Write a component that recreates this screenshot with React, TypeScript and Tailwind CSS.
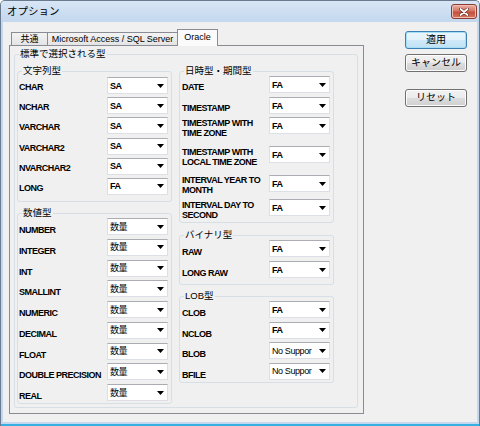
import React from "react";

const Arrow = () => (
  <svg width="7" height="4" viewBox="0 0 7 4">
    <path d="M0 0H7L3.5 4Z" fill="#000" />
  </svg>
);

function Combo({ value, bold = true }: { value: string; bold?: boolean }) {
  return (
    <div className="flex h-[17px] w-[61px] shrink-0 items-center border border-[#dcdfe6] border-t-[#abadb3] bg-white">
      <div
        className={
          "flex-1 whitespace-nowrap pl-[2px] text-[9px] leading-[10px] tracking-[-0.4px] text-black " +
          (bold ? "font-bold" : "font-normal")
        }
      >
        {value}
      </div>
      <div className="flex w-[17px] shrink-0 justify-end pr-[3px]">
        <Arrow />
      </div>
    </div>
  );
}

function Row({
  label,
  value,
  rowCls = "",
  labelCls,
  bold = true,
}: {
  label: React.ReactNode;
  value: string;
  rowCls?: string;
  labelCls: string;
  bold?: boolean;
}) {
  return (
    <div className={"flex items-start justify-between " + rowCls}>
      <div className={"text-[9px] font-bold leading-[10px] tracking-[-0.5px] text-black " + labelCls}>{label}</div>
      <Combo value={value} bold={bold} />
    </div>
  );
}

function Group({
  title,
  className,
  children,
}: {
  title: string;
  className: string;
  children?: React.ReactNode;
}) {
  return (
    <div className={"rounded-[3px] border border-[#d5dfe5] " + className}>
      <div className="-mt-[7px] ml-[4px] w-fit bg-[#f0f0f0] px-[1px] text-[9.5px] leading-[12px] text-black">
        {title}
      </div>
      {children}
    </div>
  );
}

function Btn({ children, def = false }: { children: React.ReactNode; def?: boolean }) {
  return (
    <div
      className={
        "flex h-[18px] w-[62px] items-center justify-center rounded-[3px] border text-[10px] leading-[12px] text-black " +
        (def
          ? "border-[#3c7fb1] bg-[linear-gradient(#eaf6fd,#e2f2fb_50%,#cfe9f8_51%,#bfe1f5)] shadow-[inset_0_0_0_1px_#a6def7]"
          : "border-[#707070] bg-[linear-gradient(#f2f2f2,#ebebeb_50%,#dddddd_51%,#cfcfcf)] shadow-[inset_0_0_0_1px_#fcfcfc]")
      }
    >
      {children}
    </div>
  );
}

export default function App() {
  const strRows: [string, string][] = [
    ["CHAR", "SA"],
    ["NCHAR", "SA"],
    ["VARCHAR", "SA"],
    ["VARCHAR2", "SA"],
    ["NVARCHAR2", "SA"],
    ["LONG", "FA"],
  ];
  const numRows = ["NUMBER", "INTEGER", "INT", "SMALLINT", "NUMERIC", "DECIMAL", "FLOAT", "DOUBLE PRECISION", "REAL"];

  return (
    <div className="flex h-[426px] w-[480px] flex-col overflow-hidden rounded-t-[5px] border-x border-t border-[#6b7b8f] bg-[#c3d7ee] font-['Liberation_Sans','Noto_Sans_CJK_JP',sans-serif]">
      {/* title bar */}
      <div className="flex h-[21px] shrink-0 items-start justify-between bg-[linear-gradient(#d8e6f6,#c3d7ee)]">
        <div className="pl-[6px] pt-[4px] text-[10.5px] leading-[13px] text-black">オプション</div>
        <div className="mr-[2px] mt-[3px] flex h-[15px] w-[26px] items-center justify-center rounded-[3px] border border-[#8a3a30] bg-[linear-gradient(#eab0a4,#d47766_45%,#c4503c_55%,#d9745e)] shadow-[inset_0_0_0_1px_#f0c2b6]">
          <svg width="10" height="8" viewBox="0 0 10 8">
            <path d="M1.5 1L8.5 7M8.5 1L1.5 7" stroke="#5a2018" strokeWidth="3" strokeLinecap="round" />
            <path d="M1.5 1L8.5 7M8.5 1L1.5 7" stroke="#fff" strokeWidth="1.8" strokeLinecap="round" />
          </svg>
        </div>
      </div>

      {/* client */}
      <div className="mx-[2px] flex h-[400px] shrink-0 bg-[#f0f0f0] pl-[6px] pt-[7px]">
        <div className="flex w-[355px] flex-col">
          {/* tabs */}
          <div className="flex h-[16px] items-end pl-[2px] text-[9px] text-black">
            <div className="flex h-[13px] w-[37px] items-center justify-center border border-b-0 border-[#898c95] bg-[linear-gradient(#f3f3f3,#e4e4e4)] leading-[11px]">
              共通
            </div>
            <div className="-ml-px flex h-[13px] w-[131px] items-center justify-center border border-b-0 border-[#898c95] bg-[linear-gradient(#f3f3f3,#e4e4e4)] leading-[11px]">
              Microsoft Access / SQL Server
            </div>
            <div className="relative z-10 -mb-px -ml-px flex h-[17px] w-[41px] items-start justify-center border border-b-0 border-[#898c95] bg-[#fbfbfb] pt-[2px] leading-[11px]">
              Oracle
            </div>
          </div>
          {/* panel */}
          <div className="h-[369px] w-[355px] border border-[#898c95] bg-[#f0f0f0]">
            <Group title="標準で選択される型" className="ml-[4px] mt-[8px] h-[354px] w-[344px]">
              <div className="mt-[11px] flex gap-[7px] pl-[2px]">
                {/* column 1 */}
                <div className="flex w-[155px] flex-col">
                  <Group title="文字列型" className="h-[131px]">
                    <div className="flex flex-col gap-[3.2px] pl-[1px] pr-[3px]">
                      {strRows.map(([l, v]) => (
                        <Row key={l} label={l} value={v} labelCls="pt-[5px]" />
                      ))}
                    </div>
                  </Group>
                  <Group title="数値型" className="mt-[11px] h-[191px]">
                    <div className="-mt-px flex flex-col gap-[3.75px] pl-[1px] pr-[3px]">
                      {numRows.map((l) => (
                        <Row key={l} label={l} value="数量" labelCls="pt-[7px]" bold={false} />
                      ))}
                    </div>
                  </Group>
                </div>
                {/* column 2 */}
                <div className="flex w-[155px] flex-col">
                  <Group title="日時型・期間型" className="h-[152px]">
                    <div className="-mt-px flex flex-col pl-[2px] pr-[3px]">
                      <Row label="DATE" value="FA" rowCls="h-[21px]" labelCls="pt-[6px]" />
                      <Row label="TIMESTAMP" value="FA" rowCls="h-[20px]" labelCls="pt-[6px]" />
                      <Row
                        label={
                          <>
                            TIMESTAMP WITH
                            <br />
                            TIME ZONE
                          </>
                        }
                        value="FA"
                        rowCls="h-[29px]"
                        labelCls="pt-[1px]"
                      />
                      <Row
                        label={
                          <>
                            TIMESTAMP WITH
                            <br />
                            LOCAL TIME ZONE
                          </>
                        }
                        value="FA"
                        rowCls="h-[29px]"
                        labelCls="pt-[1px]"
                      />
                      <Row
                        label={
                          <>
                            INTERVAL YEAR TO
                            <br />
                            MONTH
                          </>
                        }
                        value="FA"
                        rowCls="h-[24px]"
                        labelCls="pt-[0px]"
                      />
                      <Row
                        label={
                          <>
                            INTERVAL DAY TO
                            <br />
                            SECOND
                          </>
                        }
                        value="FA"
                        rowCls="h-[17px]"
                        labelCls="pt-[1px]"
                      />
                    </div>
                  </Group>
                  <Group title="バイナリ型" className="mt-[12px] h-[50px]">
                    <div className="-mt-px flex flex-col gap-[4px] pl-[2px] pr-[3px]">
                      <Row label="RAW" value="FA" labelCls="pt-[7px]" />
                      <Row label="LONG RAW" value="FA" labelCls="pt-[7px]" />
                    </div>
                  </Group>
                  <Group title="LOB型" className="mt-[11px] h-[87px]">
                    <div className="-mt-px flex flex-col gap-[3.67px] pl-[2px] pr-[3px]">
                      <Row label="CLOB" value="FA" labelCls="pt-[7px]" />
                      <Row label="NCLOB" value="FA" labelCls="pt-[7px]" />
                      <Row label="BLOB" value="No Suppor" labelCls="pt-[7px]" bold={false} />
                      <Row label="BFILE" value="No Suppor" labelCls="pt-[7px]" bold={false} />
                    </div>
                  </Group>
                </div>
              </div>
            </Group>
          </div>
        </div>

        {/* buttons */}
        <div className="ml-[41px] mt-[2px] flex flex-col">
          <Btn def>適用</Btn>
          <div className="mt-[5px]">
            <Btn>キャンセル</Btn>
          </div>
          <div className="mt-[17px]">
            <Btn>リセット</Btn>
          </div>
        </div>
      </div>
      <div className="h-[2px] shrink-0" />
      <div className="-mx-px h-[2px] shrink-0 bg-[#35b0e0]" />
    </div>
  );
}
